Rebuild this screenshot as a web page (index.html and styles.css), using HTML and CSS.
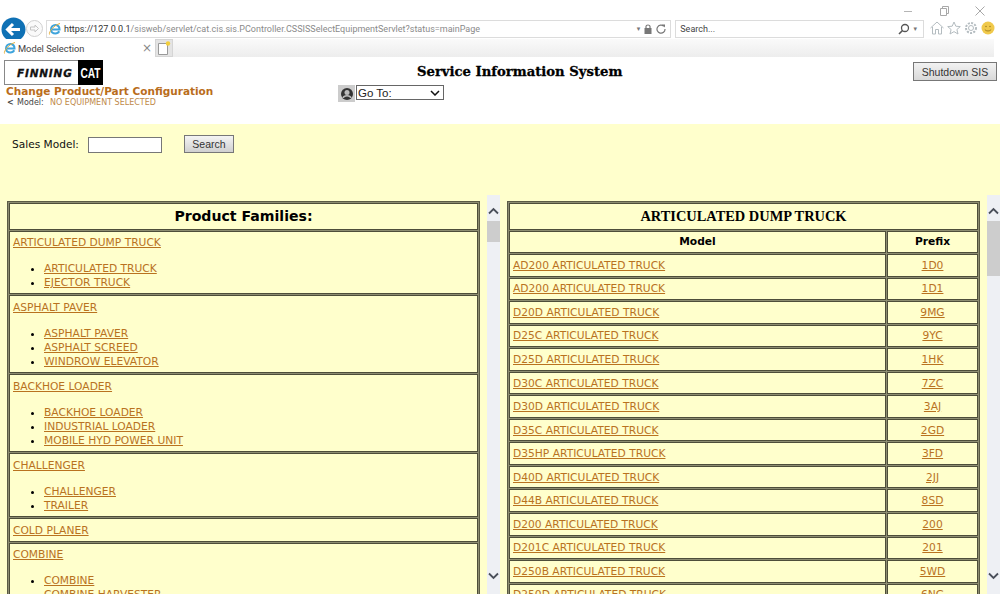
FILE: index.html
```html
<!DOCTYPE html>
<html lang="en">
<head>
<meta charset="utf-8">
<title>Model Selection</title>
<link rel="stylesheet" href="styles.css">
</head>
<body>
<div class="window-controls">
  <svg class="win-icon" width="12" height="12" viewBox="0 0 12 12"><path d="M2 6.500H10" stroke="#b5b5b5" fill="none"/></svg>
  <svg class="win-icon" width="12" height="12" viewBox="0 0 12 12"><path d="M2.500 3.500H8.500V10.500H2.500ZM4.500 3.500V1.500H10.500V8.500H8.500" stroke="#a8a8a8" fill="none"/></svg>
  <svg class="win-icon" width="12" height="12" viewBox="0 0 12 12"><path d="M1.500 1.500L10.500 10.500M10.500 1.500L1.500 10.500" stroke="#a8a8a8" fill="none"/></svg>
</div>
<div class="toolbar">
  <svg class="back" width="25" height="25" viewBox="0 0 25 25"><circle cx="12.500" cy="12.500" r="12" fill="#0f71b5"/><path d="M19 12.500H7M12 7L6.500 12.500L12 18" stroke="#fff" stroke-width="3" fill="none"/></svg>
  <svg class="forward" width="17" height="17" viewBox="0 0 17 17"><circle cx="8.500" cy="8.500" r="8" fill="#fafafa" stroke="#cfcfcf"/><path d="M4.500 7H9V5L12.500 8.500L9 12V10H4.500Z" fill="none" stroke="#c4c4c4"/></svg>
  <div class="address">
    <svg class="ie" width="14" height="14" viewBox="0 0 14 14"><path d="M3 7.500H11.500C11.500 4.500 9.500 3 7.300 3C5 3 3 5 3 7.500C3 10 5 11.500 7.300 11.500C9 11.500 10.500 10.700 11.200 9.300" fill="none" stroke="#3ea4dc" stroke-width="2"/><path d="M1.500 12.500C0.500 10 6 3 12 1.500" fill="none" stroke="#e8b13c"/></svg>
    <span class="url"><span class="url-strong">https://127.0.0.1</span>/sisweb/servlet/cat.cis.sis.PController.CSSISSelectEquipmentServlet?status=mainPage</span>
    <span class="addr-tools">
      <span class="caret">▾</span>
      <svg width="8" height="10" viewBox="0 0 8 10"><rect x="0.500" y="4" width="7" height="6" fill="#777"/><path d="M2 4.500V2.500C2 0.500 6 0.500 6 2.500V4.500" fill="none" stroke="#777" stroke-width="1.200"/></svg>
      <svg width="10" height="10" viewBox="0 0 10 10"><path d="M7.800 2.300A4 4 0 1 0 9 5" fill="none" stroke="#777" stroke-width="1.200"/><path d="M6 0.500L9 0.500V3.500Z" fill="#777"/></svg>
    </span>
  </div>
  <div class="search-box">
    <span class="search-text">Search...</span>
    <svg width="12" height="12" viewBox="0 0 12 12"><circle cx="7" cy="5" r="3.500" fill="none" stroke="#555" stroke-width="1.300"/><path d="M4.500 7.500L1 11" stroke="#555" stroke-width="1.600"/></svg>
    <span class="caret">▾</span>
  </div>
  <div class="tools">
    <svg width="14" height="14" viewBox="0 0 14 14"><path d="M0.500 7L7 1L13.500 7M2.500 6V13H5.500V8.500H8.500V13H11.500V6" fill="none" stroke="#b4bcc0"/></svg>
    <svg width="14" height="14" viewBox="0 0 14 14"><path d="M7 1L8.800 5.200L13.300 5.600L9.900 8.500L11 13L7 10.600L3 13L4.100 8.500L0.700 5.600L5.200 5.200Z" fill="none" stroke="#b4bcc0"/></svg>
    <svg width="14" height="14" viewBox="0 0 14 14"><circle cx="7" cy="7" r="2.500" fill="none" stroke="#b4bcc0"/><circle cx="7" cy="7" r="5" fill="none" stroke="#b4bcc0" stroke-width="2" stroke-dasharray="2 1.300"/></svg>
    <svg width="14" height="14" viewBox="0 0 14 14"><circle cx="7" cy="7" r="6.500" fill="#f0c94b"/><circle cx="5" cy="5.500" r="0.800" fill="#a58320"/><circle cx="9" cy="5.500" r="0.800" fill="#a58320"/><path d="M3.800 8.500C5 10.500 9 10.500 10.200 8.500" fill="none" stroke="#a58320"/></svg>
  </div>
</div>
<div class="tabbar">
  <div class="tab">
    <svg class="ie" width="14" height="14" viewBox="0 0 14 14"><path d="M3 7.500H11.500C11.500 4.500 9.500 3 7.300 3C5 3 3 5 3 7.500C3 10 5 11.500 7.300 11.500C9 11.500 10.500 10.700 11.200 9.300" fill="none" stroke="#3ea4dc" stroke-width="2"/><path d="M1.500 12.500C0.500 10 6 3 12 1.500" fill="none" stroke="#e8b13c"/></svg>
    <span class="tab-title">Model Selection</span>
    <span class="tab-close">×</span>
  </div>
  <div class="new-tab">
    <svg width="14" height="14" viewBox="0 0 14 14"><path d="M1.500 2.500H10.500V13.500H1.500Z" fill="#fff" stroke="#999"/><circle cx="11" cy="2.500" r="2.200" fill="#f3cf3c"/></svg>
  </div>
</div>
<header class="page-head">
  <div class="head-left">
    <div class="logo">
      <span class="logo-finning">FINNING</span>
      <span class="logo-cat"><span class="logo-cat-text">CAT</span></span>
    </div>
    <div class="config-title">Change Product/Part Configuration</div>
    <div class="model-line"><span class="model-arrow">&lt;</span><span class="model-label">Model:</span><span class="model-value">NO EQUIPMENT SELECTED</span></div>
  </div>
  <div class="head-center">
    <div class="sis-title">Service Information System</div>
    <div class="goto">
      <span class="goto-icon">
        <svg width="14" height="14" viewBox="0 0 14 14"><circle cx="7" cy="7" r="6" fill="#333"/><circle cx="7" cy="5.500" r="2.500" fill="#bbb"/><path d="M3 11C4 8 10 8 11 11" fill="none" stroke="#bbb" stroke-width="1.500"/></svg>
      </span>
      <span class="goto-wrap">
        <select class="goto-select"><option>Go To:</option></select>
        <svg class="goto-chevron" width="10" height="6" viewBox="0 0 10 6"><path d="M1 1L5 5L9 1" fill="none" stroke="#111" stroke-width="1.500"/></svg>
      </span>
    </div>
  </div>
  <button class="shutdown" type="button">Shutdown SIS</button>
</header>
<section class="search-band">
  <label class="sales-label" for="sales">Sales Model:</label>
  <input class="sales-input" id="sales" type="text">
  <button class="search-button" type="button">Search</button>
</section>
<main class="panes">
  <div class="pane">
    <div class="frame">
      <div class="cell title-cell families-title">Product Families:</div>
      <div class="cell family">
        <a href="#">ARTICULATED DUMP TRUCK</a>
        <ul><li><a href="#">ARTICULATED TRUCK</a></li><li><a href="#">EJECTOR TRUCK</a></li></ul>
      </div>
      <div class="cell family">
        <a href="#">ASPHALT PAVER</a>
        <ul><li><a href="#">ASPHALT PAVER</a></li><li><a href="#">ASPHALT SCREED</a></li><li><a href="#">WINDROW ELEVATOR</a></li></ul>
      </div>
      <div class="cell family">
        <a href="#">BACKHOE LOADER</a>
        <ul><li><a href="#">BACKHOE LOADER</a></li><li><a href="#">INDUSTRIAL LOADER</a></li><li><a href="#">MOBILE HYD POWER UNIT</a></li></ul>
      </div>
      <div class="cell family">
        <a href="#">CHALLENGER</a>
        <ul><li><a href="#">CHALLENGER</a></li><li><a href="#">TRAILER</a></li></ul>
      </div>
      <div class="cell family"><a href="#">COLD PLANER</a></div>
      <div class="cell family">
        <a href="#">COMBINE</a>
        <ul><li><a href="#">COMBINE</a></li><li><a href="#">COMBINE HARVESTER</a></li></ul>
      </div>
    </div>
    <div class="scrollbar">
      <svg class="arrow" width="13" height="8" viewBox="0 0 13 8"><path d="M2 6.500L6.500 2L11 6.500" fill="none" stroke="#4a4f5a" stroke-width="1.800"/></svg>
      <span class="thumb thumb-left"></span>
      <svg class="arrow arrow-down" width="13" height="8" viewBox="0 0 13 8"><path d="M2 1.500L6.500 6L11 1.500" fill="none" stroke="#4a4f5a" stroke-width="1.800"/></svg>
    </div>
  </div>
  <div class="pane">
    <div class="frame">
      <div class="cell title-cell model-title">ARTICULATED DUMP TRUCK</div>
      <div class="model-grid">
        <div class="cell head">Model</div><div class="cell head">Prefix</div>
        <div class="cell row"><a href="#">AD200 ARTICULATED TRUCK</a></div><div class="cell row pre"><a href="#">1D0</a></div>
        <div class="cell row"><a href="#">AD200 ARTICULATED TRUCK</a></div><div class="cell row pre"><a href="#">1D1</a></div>
        <div class="cell row"><a href="#">D20D ARTICULATED TRUCK</a></div><div class="cell row pre"><a href="#">9MG</a></div>
        <div class="cell row"><a href="#">D25C ARTICULATED TRUCK</a></div><div class="cell row pre"><a href="#">9YC</a></div>
        <div class="cell row"><a href="#">D25D ARTICULATED TRUCK</a></div><div class="cell row pre"><a href="#">1HK</a></div>
        <div class="cell row"><a href="#">D30C ARTICULATED TRUCK</a></div><div class="cell row pre"><a href="#">7ZC</a></div>
        <div class="cell row"><a href="#">D30D ARTICULATED TRUCK</a></div><div class="cell row pre"><a href="#">3AJ</a></div>
        <div class="cell row"><a href="#">D35C ARTICULATED TRUCK</a></div><div class="cell row pre"><a href="#">2GD</a></div>
        <div class="cell row"><a href="#">D35HP ARTICULATED TRUCK</a></div><div class="cell row pre"><a href="#">3FD</a></div>
        <div class="cell row"><a href="#">D40D ARTICULATED TRUCK</a></div><div class="cell row pre"><a href="#">2JJ</a></div>
        <div class="cell row"><a href="#">D44B ARTICULATED TRUCK</a></div><div class="cell row pre"><a href="#">8SD</a></div>
        <div class="cell row"><a href="#">D200 ARTICULATED TRUCK</a></div><div class="cell row pre"><a href="#">200</a></div>
        <div class="cell row"><a href="#">D201C ARTICULATED TRUCK</a></div><div class="cell row pre"><a href="#">201</a></div>
        <div class="cell row"><a href="#">D250B ARTICULATED TRUCK</a></div><div class="cell row pre"><a href="#">5WD</a></div>
        <div class="cell row"><a href="#">D250D ARTICULATED TRUCK</a></div><div class="cell row pre"><a href="#">6NG</a></div>
      </div>
    </div>
    <div class="scrollbar">
      <svg class="arrow" width="13" height="8" viewBox="0 0 13 8"><path d="M2 6.500L6.500 2L11 6.500" fill="none" stroke="#4a4f5a" stroke-width="1.800"/></svg>
      <span class="thumb thumb-right"></span>
      <svg class="arrow arrow-down" width="13" height="8" viewBox="0 0 13 8"><path d="M2 1.500L6.500 6L11 1.500" fill="none" stroke="#4a4f5a" stroke-width="1.800"/></svg>
    </div>
  </div>
</main>
</body>
</html>
```
FILE: styles.css
```css
* { box-sizing: border-box; }
html, body { margin: 0; height: 594px; overflow: hidden; }
body { background: #fff; font-family: "DejaVu Sans", sans-serif; display: flex; flex-direction: column; position: relative; }

.window-controls { position: absolute; top: 5px; right: 14px; display: flex; gap: 24px; }
.toolbar { height: 39px; padding: 17px 5px 0 1px; display: flex; align-items: flex-start; flex: none; }
.forward { margin: 3px 3px 0 0; }
.address { width: 626px; height: 18px; margin-top: 3px; margin-right: 4px; border: 1px solid #dcdcdc; display: flex; align-items: center; padding: 0 4px 0 1px; background: #fff; }
.ie { flex: none; }
.url { font: 9px "Roboto", sans-serif; color: #8a8a8a; margin-left: 2px; white-space: nowrap; flex: 1; }
.url-strong { color: #333; }
.addr-tools { display: flex; align-items: center; gap: 4px; }
.caret { font-size: 7px; color: #777; }
.search-box { width: 249px; height: 18px; margin-top: 3px; border: 1px solid #dcdcdc; display: flex; align-items: center; gap: 3px; padding: 0 6px 0 4px; }
.search-text { font: 9px "Roboto", sans-serif; color: #444; flex: 1; }
.tools { display: flex; gap: 3px; margin: 4px 0 0 6px; }

.tabbar { height: 18px; flex: none; display: flex; background: linear-gradient(#fafafa, #ededed); margin-right: 6px; }
.tab { width: 155px; background: #fff; display: flex; align-items: center; padding: 0 3px; }
.tab-title { font: 9.300px "Roboto", sans-serif; color: #444; margin-left: 1px; flex: 1; white-space: nowrap; }
.tab-close { font-size: 12px; color: #888; }
.new-tab { width: 18px; background: #e4e4e4; border: 1px solid #d5d5d5; display: flex; align-items: center; justify-content: center; }

.page-head { height: 67px; flex: none; display: flex; padding: 3px 3px 0 4px; background: #fff; }
.head-left { width: 335px; flex: none; }
.logo { width: 99px; height: 25px; border: 1px solid #888; border-right: 0; display: flex; align-items: center; justify-content: space-between; padding-left: 12px; }
.logo-finning { font: italic 700 10.500px "DejaVu Sans", sans-serif; letter-spacing: 0.800px; -webkit-text-stroke: 0.300px #111; color: #111; }
.logo-cat { width: 25px; height: 25px; background: #000; color: #fff; display: flex; align-items: center; justify-content: center; margin-top: -1px; margin-bottom: -1px; overflow: hidden; }
.logo-cat-text { font: 700 15px "Liberation Sans", sans-serif; letter-spacing: -0.300px; transform: scaleX(0.68); }
.config-title { font: 700 10.500px/12px "DejaVu Sans", sans-serif; color: #b96d1c; padding-left: 2px; white-space: nowrap; }
.model-line { font-size: 8px; line-height: 10px; display: flex; align-items: center; padding-left: 3px; margin-top: 1px; color: #444; white-space: nowrap; }
.model-arrow { font-weight: 700; width: 10px; }
.model-label { width: 33px; }
.model-value { color: #c08a4a; }
.head-center { width: 574px; flex: none; }
.sis-title { font: 700 13.200px/16px "DejaVu Serif", serif; -webkit-text-stroke: 0.300px #000; color: #000; margin: 4px 0 0 78px; white-space: nowrap; }
.goto { display: flex; align-items: flex-start; margin-top: 5px; margin-left: -1px; }
.goto-icon { width: 17px; height: 17px; background: #ccc; display: flex; align-items: center; justify-content: center; }
.goto-wrap { position: relative; margin-left: 1px; display: flex; }
.goto-select { width: 88px; height: 15px; font: 11.500px "Liberation Sans", sans-serif; border: 1px solid #666; background: #fff; padding: 0 0 0 1px; border-radius: 0; appearance: none; color: #222; }
.goto-chevron { position: absolute; right: 4px; top: 5px; }
.shutdown { width: 84px; height: 19px; margin-top: 2px; padding: 0; font: 10.500px "Liberation Sans", sans-serif; color: #333; background: linear-gradient(#f2f2f2, #d8d8d8); border: 1px solid #777; }

.search-band { height: 71px; flex: none; background: #ffffcc; display: flex; align-items: flex-start; padding: 11px 0 0 12px; }
.sales-label { font-size: 10.600px; color: #111; margin-top: 3px; width: 66px; white-space: nowrap; }
.sales-input { width: 74px; height: 16px; margin-left: 10px; margin-top: 2px; border: 1px solid #777; background: #fff; }
.search-button { width: 50px; height: 18px; margin-left: 22px; padding: 0; font: 10.500px "Liberation Sans", sans-serif; color: #333; background: linear-gradient(#f4f4f4, #d0d0d0); border: 1px solid #777; }

.panes { flex: 1; min-height: 0; display: flex; background: #ffffcc; overflow: hidden; }
.pane { width: 500px; flex: none; padding-left: 7px; display: flex; align-items: flex-start; overflow: hidden; }
.frame { width: 473px; flex: none; border: 1px solid #5b5b45; margin-top: 6px; padding: 1px; background: #8d8d72; display: flex; flex-direction: column; gap: 1px; }
.cell { border: 1px solid #4e4e3a; background: #ffffcc; }
.title-cell { height: 26.500px; text-align: center; color: #000; font-weight: 700; display: flex; align-items: center; justify-content: center; }
.families-title { font-size: 14.100px; }
.model-title { font: 700 14.400px "Liberation Serif", serif; }
.family { padding: 4.500px 3px 2.550px; font-size: 10.700px; line-height: 14.300px; }
.family ul { margin: 11.700px 0 0.150px; padding: 0 0 0 31px; }
a { color: #b9721f; }
.model-grid { display: grid; grid-template-columns: 1fr 91px; gap: 1px; grid-template-rows: 22.500px; grid-auto-rows: 22.550px; }
.head { font-weight: 700; font-size: 10.700px; text-align: center; display: flex; align-items: center; justify-content: center; }
.row { font-size: 10.700px; display: flex; align-items: center; padding-left: 3px; }
.pre { justify-content: center; padding-left: 0; }

.scrollbar { width: 13px; margin-left: 7px; height: 399px; background: #eef0f4; position: relative; flex: none; }
.arrow { position: absolute; left: 0; top: 12px; }
.arrow-down { top: auto; bottom: 14px; }
.thumb { position: absolute; left: 0; top: 26px; width: 13px; background: #cdcdcd; }
.thumb-left { height: 21px; }
.thumb-right { height: 55px; }
```
